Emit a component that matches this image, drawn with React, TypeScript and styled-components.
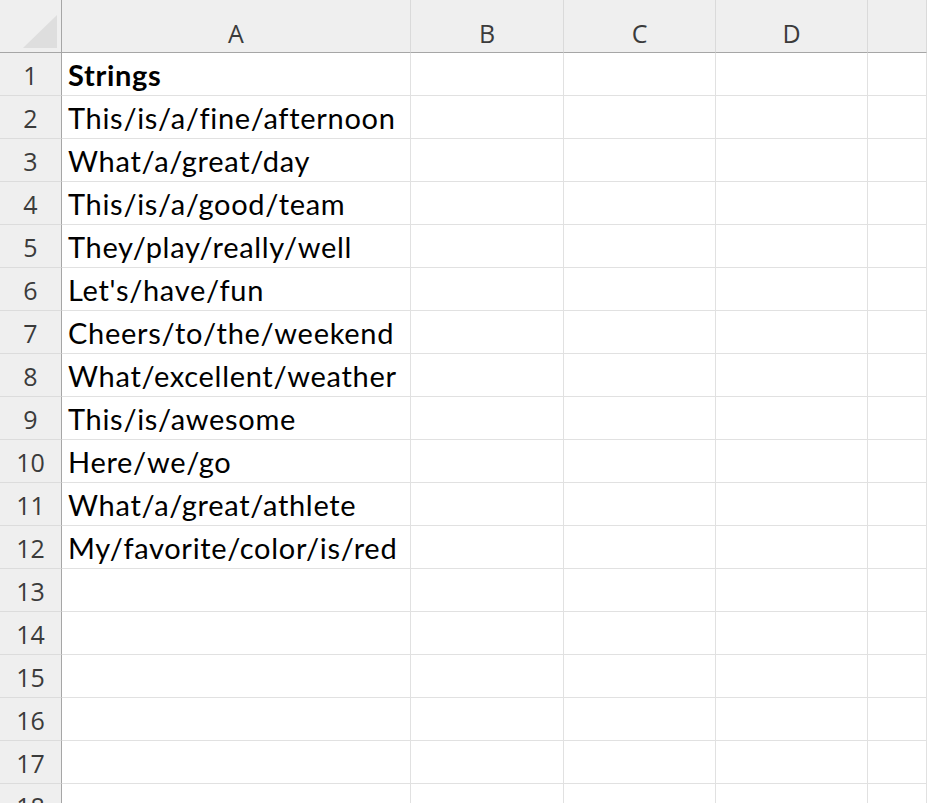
import React from 'react';
import styled, { createGlobalStyle } from 'styled-components';

const rows = [
  'Strings',
  'This/is/a/fine/afternoon',
  'What/a/great/day',
  'This/is/a/good/team',
  'They/play/really/well',
  "Let's/have/fun",
  'Cheers/to/the/weekend',
  'What/excellent/weather',
  'This/is/awesome',
  'Here/we/go',
  'What/a/great/athlete',
  'My/favorite/color/is/red',
];

const columns = ['A', 'B', 'C', 'D', ''];
const TOTAL_ROWS = 18;

const GlobalStyle = createGlobalStyle`
  html, body {
    margin: 0;
    padding: 0;
    background: #ffffff;
  }
`;

const Sheet = styled.div`
  width: 927px;
  height: 803px;
  overflow: hidden;
  display: grid;
  grid-template-columns: 62px 349px 153px 152px 152px 1fr;
  grid-template-rows: 53px;
  grid-auto-rows: 43px;
  background: #fff;
`;

const Corner = styled.div`
  position: relative;
  background: #efefef;
  border-right: 1px solid #a6a6a6;
  border-bottom: 1px solid #a6a6a6;
`;

const CornerTriangle = styled.div`
  position: absolute;
  right: 4px;
  bottom: 4px;
  width: 0;
  height: 0;
  border-left: 34px solid transparent;
  border-bottom: 33px solid #dedede;
`;

const ColHeader = styled.div`
  background: #efefef;
  border-right: 1px solid #dadada;
  border-bottom: 1px solid #a6a6a6;
  display: flex;
  align-items: center;
  justify-content: center;
  padding-top: 13px;
  font-family: 'Open Sans', 'Noto Sans', sans-serif;
  font-size: 25px;
  color: #3b3b3b;
`;

const RowHeader = styled.div`
  background: #efefef;
  border-right: 1px solid #a6a6a6;
  border-bottom: 1px solid #dcdcdc;
  display: flex;
  align-items: center;
  justify-content: center;
  padding-top: 2px;
  font-family: 'Open Sans', 'Noto Sans', sans-serif;
  font-size: 25px;
  color: #3b3b3b;
`;

const Cell = styled.div<{ $bold?: boolean }>`
  border-right: 1px solid #e1e1e1;
  border-bottom: 1px solid #e1e1e1;
  display: flex;
  align-items: center;
  padding: 1px 0 0 6px;
  white-space: nowrap;
  font-family: Lato, 'Liberation Sans', sans-serif;
  font-size: 29px;
  letter-spacing: 0.7px;
  font-weight: ${p => (p.$bold ? 700 : 400)};
  color: #000;
`;

const App: React.FC = () => {
  return (
    <>
      <GlobalStyle />
      <Sheet>
        <Corner>
          <CornerTriangle />
        </Corner>
        {columns.map((c, i) => (
          <ColHeader key={i}>{c}</ColHeader>
        ))}
        {Array.from({ length: TOTAL_ROWS }, (_, r) => (
          <React.Fragment key={r}>
            <RowHeader>{r + 1}</RowHeader>
            <Cell $bold={r === 0}>{rows[r] ?? ''}</Cell>
            <Cell />
            <Cell />
            <Cell />
            <Cell />
          </React.Fragment>
        ))}
      </Sheet>
    </>
  );
};

export default App;
